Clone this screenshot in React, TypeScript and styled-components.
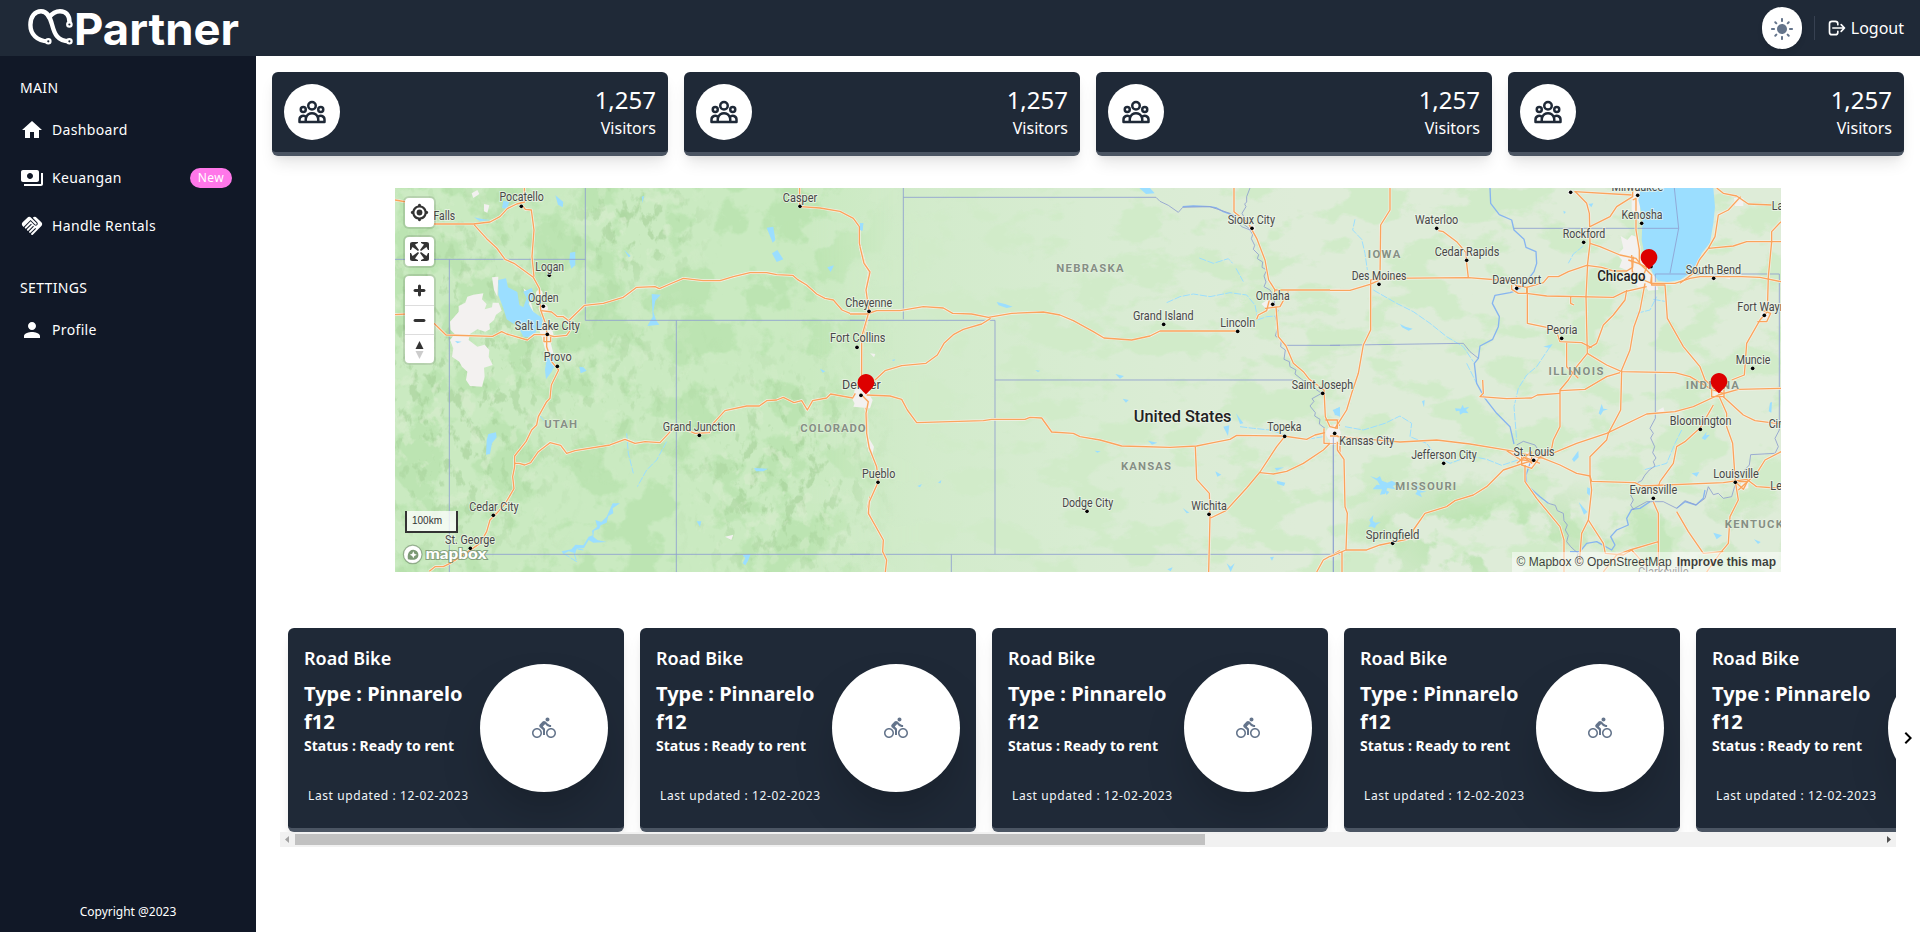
import React from "react";
import styled, { createGlobalStyle } from "styled-components";
import {
  MdChevronRight,
  MdDirectionsBike,
  MdHandshake,
  MdHome,
  MdLightMode,
  MdPayments,
  MdPerson,
} from "react-icons/md";

const GlobalStyle = createGlobalStyle`
  *, *::before, *::after { box-sizing: border-box; }
  body {
    margin: 0;
    background: #fff;
    color: #fff;
    font: 16px/24px "Noto Sans", sans-serif;
  }
  h2, h3, h4, p, ul { margin: 0; padding: 0; }
  svg { display: block; }
`;

/* ---------- Shell ---------- */

const Page = styled.div`
  display: flex;
  flex-direction: column;
  height: 932px;
  overflow: hidden;
`;

const Header = styled.header`
  display: flex;
  align-items: center;
  justify-content: space-between;
  flex: 0 0 56px;
  padding: 0 16px 0 28px;
  background: #1f2937;
`;

const HeaderActions = styled.div`
  display: flex;
  align-items: center;
`;

const ThemeButton = styled.button`
  display: grid;
  place-items: center;
  width: 40px;
  height: 42px;
  padding: 2px 0 0;
  border: 0;
  border-radius: 21px;
  background: #fff;
  color: #64748b;
  box-shadow: 0 4px 6px -1px rgba(0, 0, 0, 0.1);
`;

const Divider = styled.span`
  width: 1px;
  height: 24px;
  margin: 0 12px;
  background: #374151;
`;

const Logout = styled.a`
  display: flex;
  align-items: center;
  gap: 4px;
`;

const Body = styled.div`
  display: flex;
  flex: 1;
  min-height: 0;
`;

const Sidebar = styled.nav`
  display: flex;
  flex-direction: column;
  justify-content: space-between;
  flex: 0 0 256px;
  background: #111827;
  font-size: 14px;
  line-height: 20px;
  letter-spacing: 0.35px;
`;

const Menu = styled.ul`
  display: flex;
  flex-direction: column;
  gap: 4px;
  padding-top: 16px;
  list-style: none;
`;

const MenuHeading = styled.li<{ $spaced?: boolean }>`
  display: flex;
  align-items: center;
  height: 32px;
  margin-top: ${(p) => (p.$spaced ? 20 : 0)}px;
  padding: 0 20px;
`;

const MenuItem = styled.li`
  display: flex;
  align-items: center;
  gap: 8px;
  height: 44px;
  padding: 0 24px 0 20px;
`;

const Pill = styled.span`
  margin-left: auto;
  padding: 0 8px;
  border-radius: 10px;
  background: #ff77e9;
  font-size: 12px;
`;

const Copyright = styled.p`
  padding-bottom: 12px;
  text-align: center;
  font-size: 12px;
  line-height: 16px;
  letter-spacing: 0;
`;

const Main = styled.main`
  flex: 1;
  min-width: 0;
  padding-top: 16px;
`;

/* ---------- Statistics ---------- */

const Stats = styled.section`
  display: grid;
  grid-template-columns: repeat(4, 1fr);
  gap: 16px;
  padding: 0 16px;
`;

const StatCard = styled.article`
  display: flex;
  align-items: center;
  justify-content: space-between;
  height: 84px;
  padding: 0 12px;
  border-bottom: 4px solid #4b5563;
  border-radius: 6px;
  background: #1f2937;
  box-shadow: 0 10px 15px -3px rgba(0, 0, 0, 0.1), 0 4px 6px -2px rgba(0, 0, 0, 0.05);
`;

const StatIcon = styled.div`
  display: grid;
  place-items: center;
  width: 56px;
  height: 56px;
  border-radius: 50%;
  background: #fff;
  color: #1f2937;
`;

const StatText = styled.div`
  text-align: right;
`;

const StatValue = styled.p`
  font-size: 24px;
  line-height: 32px;
`;

/* ---------- Map ---------- */

const MapFrame = styled.section`
  position: relative;
  width: 1386px;
  height: 384px;
  margin: 32px 0 56px 139px;
  overflow: hidden;
  font: 12px/20px "Liberation Sans", sans-serif;
  color: rgba(0, 0, 0, 0.75);
`;

const MapControls = styled.div`
  position: absolute;
  left: 10px;
  top: 10px;
  display: flex;
  flex-direction: column;
  gap: 10px;
`;

const ControlGroup = styled.div`
  width: 29px;
  border-radius: 4px;
  background: #fff;
  box-shadow: 0 0 0 2px rgba(0, 0, 0, 0.1);
  overflow: visible;
`;

const ControlButton = styled.div`
  width: 29px;
  height: 29px;
  color: #333;

  & + & {
    border-top: 1px solid #ddd;
  }
`;

const ScaleBar = styled.div`
  position: absolute;
  left: 10px;
  top: 323px;
  width: 53px;
  height: 22px;
  padding: 0 5px;
  border: 2px solid #333;
  border-top: 0;
  background: rgba(255, 255, 255, 0.75);
  color: #333;
  font-size: 10px;
  line-height: 20px;
`;

const MapLogo = styled.svg`
  position: absolute;
  left: 6px;
  top: 355px;
`;

const Attribution = styled.div`
  position: absolute;
  right: 0;
  bottom: 0;
  display: flex;
  gap: 5px;
  padding: 0 5px;
  background: rgba(255, 255, 255, 0.5);
  white-space: pre;
`;

const Pin = styled.svg<{ $x: number; $y: number }>`
  position: absolute;
  left: ${(p) => p.$x}px;
  top: ${(p) => p.$y}px;
`;

/* ---------- Bikes ---------- */

const BikeSection = styled.section`
  display: flex;
  align-items: center;
  padding-left: 24px;
  color: #000;
`;

const BikeScroller = styled.div`
  flex: 1;
  min-width: 0;
`;

const BikeTrack = styled.div`
  display: flex;
  gap: 16px;
  padding: 0 8px;
  overflow: hidden;
`;

const BikeCard = styled.article`
  display: flex;
  flex: 0 0 336px;
  height: 204px;
  padding: 16px;
  border-bottom: 4px solid #4b5563;
  border-radius: 6px;
  background: #1f2937;
  color: #fff;
  box-shadow: 0 10px 15px -3px rgba(0, 0, 0, 0.1), 0 4px 6px -2px rgba(0, 0, 0, 0.05);
`;

const BikeInfo = styled.div`
  width: 176px;
`;

const BikeTitle = styled.h2`
  margin-bottom: 8px;
  font-size: 18px;
  line-height: 28px;
  font-weight: 600;
`;

const BikeType = styled.h3`
  font-size: 20px;
  line-height: 28px;
  font-weight: 700;
`;

const BikeStatus = styled.h4`
  font-size: 14px;
  line-height: 20px;
  font-weight: 700;
`;

const BikeUpdated = styled.p`
  margin: 32px 0 0 4px;
  font-size: 12px;
  line-height: 16px;
  letter-spacing: 0.6px;
  white-space: nowrap;
  color: #f1f5f9;
`;

const BikeBadge = styled.div`
  display: grid;
  place-items: center;
  width: 128px;
  height: 128px;
  margin-top: 20px;
  border-radius: 50%;
  background: #fff;
  color: #64748b;
  box-shadow: 0 25px 50px -12px rgba(0, 0, 0, 0.25);
`;

const ScrollBar = styled.div`
  display: flex;
  align-items: center;
  height: 15px;
  background: #f1f1f1;
`;

const ScrollThumb = styled.div`
  width: 910px;
  height: 11px;
  margin-right: auto;
  background: #c1c1c1;
`;

/* ---------- Drawings ---------- */

const Logo = () => (
  <svg width="220" height="56" viewBox="0 0 220 56" fill="none">
    <g stroke="#fff" strokeWidth="4.400" strokeLinecap="round">
      <path d="M20 41.300C9 41.300 2.400 34 2.400 25C2.400 16.500 7 11.200 13 11.200C19.500 11.200 22 17 24 24.500C26.500 34 29.500 41.300 41 41.300" />
      <path d="M21.500 17C24.500 13 28 11.200 32 11.200C38 11.200 41.500 15 41.500 22" />
    </g>
    <g fill="#1f2937" stroke="#fff" strokeWidth="2.200">
      <circle cx="20.300" cy="41.300" r="2.200" />
      <circle cx="41.400" cy="41.300" r="2.200" />
      <circle cx="41.400" cy="24.500" r="2.200" />
    </g>
    <text
      x="46"
      y="45"
      fill="#fff"
      fontFamily="Inter, sans-serif"
      fontWeight="700"
      fontSize="44.500"
      textLength="165"
      lengthAdjust="spacingAndGlyphs"
    >
      Partner
    </text>
  </svg>
);

const LogoutIcon = () => (
  <svg width="20" height="20" viewBox="0 0 24 24" fill="none" stroke="currentColor" strokeWidth="2" strokeLinecap="round" strokeLinejoin="round">
    <path d="M17 16l4-4m0 0l-4-4m4 4H7m6 4v1a3 3 0 01-3 3H6a3 3 0 01-3-3V7a3 3 0 013-3h4a3 3 0 013 3v1" />
  </svg>
);

const UsersIcon = () => (
  <svg width="30" height="30" viewBox="0 0 24 24" fill="none" stroke="currentColor" strokeWidth="2" strokeLinecap="round" strokeLinejoin="round">
    <path d="M17 20h5v-2a3 3 0 00-5.356-1.857M17 20H7m10 0v-2c0-.656-.126-1.283-.356-1.857M7 20H2v-2a3 3 0 015.356-1.857M7 20v-2c0-.656.126-1.283.356-1.857m0 0a5.002 5.002 0 019.288 0M15 7a3 3 0 11-6 0 3 3 0 016 0zm6 3a2 2 0 11-4 0 2 2 0 014 0zM7 10a2 2 0 11-4 0 2 2 0 014 0z" />
  </svg>
);

const PIN_PATH =
  "M20.2,15.7L20.2,15.7c1.1-1.6,1.8-3.6,1.8-5.7c0-5.6-4.5-10-10-10S2,4.5,2,10c0,2,0.6,3.9,1.6,5.4c0,0.1,0.1,0.2,0.2,0.3c0,0,0.1,0.1,0.1,0.2c0.2,0.3,0.4,0.6,0.7,0.9c2.6,3.1,7.4,7.6,7.4,7.6s4.8-4.5,7.4-7.5c0.2-0.3,0.5-0.6,0.7-0.9C20.1,15.8,20.2,15.8,20.2,15.7z";

const pins = [
  { x: 460.7, y: 186 },
  { x: 1244, y: 61 },
  { x: 1313.7, y: 185 },
];

/* ---------- Map data ----------
   The map is split into three sheets, each drawn in units of a third of a pixel. */

type Kind = "city" | "state" | "large" | "country";
type Label = { t: string; x: number; y: number; w: number; kind?: Kind };

interface Sheet {
  offset: number;
  desert: string[];
  water: string[];
  streams: string[];
  rivers: string[];
  borders: string[];
  roads: string[];
  towns: [number, number, number?][];
  dots: [number, number][];
  labels: Label[];
}

const city = (t: string, x: number, y: number, w: number, kind: Kind = "city"): Label => ({ t, x, y, w, kind });

const sheets: Sheet[] = [
  {
    offset: -5,
    desert: [
      "M232 350L250 344L280 340L276 358L290 372L284 388L306 382L308 368L326 368L335 392L318 404L312 420L298 432L300 448L286 455L262 448L240 462L236 480L262 500L284 494L298 510L296 530L308 555L282 563L284 590L276 620L240 618L228 600L232 575L216 560L208 545L186 530L190 505L180 480L194 462L182 450L180 425L206 395L206 378L226 368Z",
      "M306 292L325 290L322 350L312 330Z",
      "M245 40L262 30L268 42L250 54Z M282 72L298 76L292 98L282 94Z",
      "M400 325L415 335L430 395L470 440L490 520L470 525L455 470L440 430Z",
      "M1005 1070L1030 1064L1024 1080Z",
      "M1395 625L1420 615L1440 622V680H1400L1388 660Z",
    ],
    water: [
      "M325 300L348 295L354 322L382 336L388 375L400 382L410 355L400 335L425 324L432 345L415 372L430 395L458 415L455 442L440 452L425 472L400 470L385 440L350 418L340 385L325 345Z",
      "M470 535L490 530L495 555L485 575L468 598L465 570Z",
      "M540 218L556 215L556 255L544 266L538 245Z",
      "M295 762L318 757L320 772L306 790L300 822L288 824L290 780Z",
      "M496 46L520 66L518 82L504 74Z M568 560L580 562L590 572L572 580Z",
      "M703 210L722 228L716 232Z M1130 143L1150 140L1156 180L1148 188Z M1146 220L1162 210L1180 238L1160 246Z",
      "M785 342L812 344L796 362L790 395L798 420L808 434L772 438L788 410Z",
      "M1312 262L1332 256L1322 276Z M1410 130L1420 130L1418 152L1408 150Z M1290 566L1306 574L1298 578Z",
      "M1092 864L1134 866L1120 874L1098 874Z M340 62L358 66L350 86L336 84Z M755 50L762 48L758 70Z",
      "M668 970L690 970L668 985L670 1000L655 1008L650 1028L632 1036L628 1046L612 1052L610 1070L622 1080L650 1086L610 1088L596 1080L582 1104L560 1106L556 1120L536 1114L520 1122L515 1114L545 1108L556 1094L580 1096L596 1070L608 1066L606 1052L622 1040L616 1020L634 1026L650 1010Z",
      "M1058 1126L1082 1122L1074 1142L1066 1156L1058 1150L1066 1134Z M920 1024L934 1024L930 1040Z M195 483L215 485L202 490Z",
      "M252 112L280 118L302 120L270 124Z",
    ],
    streams: ["M450 708L475 735", "M710 760L715 820L730 880", "M830 785L800 840L770 870L742 920", "M520 1120L560 1145L548 1105L580 1110"],
    rivers: [],
    borders: ["M15 238H586", "M178 238V1176", "M586 24V421H1440", "M859 421V1176", "M178 1123H1440"],
    roads: [
      "M15 60L50 66M132 132H250L300 126L330 110L352 86L380 72L392 69L404 66L403 24",
      "M398 78L406 88L424 90L432 150L426 230L432 290",
      "M252 134L290 176L320 204L345 238L372 250L400 270L430 292L448 325L452 390L470 440L470 500L485 545L506 570L484 615L480 655L470 665L445 710L440 735L425 750L408 785L374 828L374 860L368 890L372 926L345 972L320 1000L300 1020L290 1055L270 1090L230 1118L180 1150L160 1160H135L118 1174",
      "M15 404L50 402M132 430L168 465L308 469L335 455L350 462L412 480L432 464H470L492 470L530 466L540 452L538 420L584 376L640 370L700 352L740 322L795 320L808 326L840 312L880 295L940 302H990L1030 290L1080 278L1130 278L1160 284L1208 286L1222 298L1250 315L1280 342L1305 355L1330 360L1356 390L1380 400L1440 402",
      "M454 392L485 396L502 410L520 410L538 424",
      "M462 470V485H482V470",
      "M374 850H388L404 855L422 848L445 815L480 788L512 796L530 820L555 812L660 795L705 778L735 790L765 785L810 788L850 745M890 750L915 760L958 758L970 730L1005 692L1070 678H1108L1130 662L1160 660L1180 652L1212 668L1235 662L1252 690L1268 662L1310 654L1322 642L1388 654L1396 640",
      "M1229 24V79M1232 80L1290 84L1350 94L1390 115L1408 140L1408 190L1424 250L1438 276L1428 330L1438 395L1416 480L1413 620",
      "M1418 645L1430 700L1432 770L1440 815M1440 950L1434 980L1440 1010",
    ],
    towns: [[448, 340], [460, 385, 14], [472, 463, 18]],
    dots: [[394, 79], [478, 286], [460, 379], [472, 463], [502, 559], [1230, 79], [928, 766], [310, 1006], [241, 1105]],
    labels: [
      city("Pocatello", 395, 51, 133),
      city("Falls", 163, 106, 65),
      city("Logan", 479, 261, 86),
      city("Ogden", 460, 353, 92),
      city("Salt Lake City", 472, 437, 195),
      city("Provo", 503, 531, 84),
      city("Casper", 1230, 54, 103),
      city("Grand Junction", 927, 739, 218),
      city("Cedar City", 312, 980, 148),
      city("St. George", 240, 1079, 150),
      city("UTAH", 512, 732, 98, "state"),
      city("COLORADO", 1329, 743, 196, "state"),
    ],
  },
  {
    offset: 465,
    desert: ["M-5 640L22 635L38 660L30 685L-20 680Z", "M24 770L42 800L38 820L22 800Z", "M30 520L46 522L42 532Z", "M1204 372L1226 356L1246 375L1225 392Z"],
    water: [
      "M838 24H870L884 40L858 42Z",
      "M410 366L435 372L458 380L440 384L416 376Z",
      "M766 582L792 588L780 596Z M788 656L806 660L798 668Z M864 782L892 788L876 794Z M704 812L722 814L712 818Z",
      "M1128 700L1150 730L1140 732Z M1090 740L1108 736L1104 768Z M1066 874L1084 884L1072 890Z M968 984L988 998L980 1000Z",
      "M1250 902L1276 908L1272 918L1252 912Z M1244 864L1272 862L1250 872Z M1418 690L1440 682V710L1426 704Z M1230 1132L1242 1130L1236 1142Z",
      "M1100 1150L1112 1160L1124 1150L1112 1176Z M922 1168L938 1162L932 1174Z M172 918L186 912L180 922Z M234 908L244 900L242 910Z M95 540L106 538L102 544Z M526 570L540 572L534 576Z M0 130H10L6 152L0 150Z",
    ],
    streams: [
      "M920 368L960 350L1000 342L1050 350L1110 338L1160 345L1185 375L1192 410",
      "M1018 234L1060 250L1105 236L1118 250M1128 265L1150 305",
      "M1192 420L1220 410L1245 408",
      "M1140 740L1180 745L1230 750L1290 770L1340 778L1390 770",
    ],
    rivers: ["M968 80L1000 78L1050 80L1070 84L1090 95L1125 108"],
    borders: [
      "M130 24V418",
      "M130 52H888L900 64L925 76L955 97L968 82L1050 80L1110 100L1128 118L1145 140L1170 150",
      "M1170 24L1160 50L1160 66L1154 72L1158 80L1146 100L1156 118L1150 132L1168 146L1178 164L1174 176L1184 196L1180 208L1196 224L1192 236L1208 246L1206 262L1220 270L1212 288L1218 306L1212 320L1230 330L1242 350L1244 380L1254 392L1246 410L1254 440L1246 468L1264 480L1262 500L1276 510L1272 538L1288 545L1290 560L1308 570L1305 582L1325 598L1385 640L1356 656L1362 664L1350 678L1366 698L1364 708L1380 718L1378 732L1395 745",
      "M-30 421H405V1123",
      "M405 600H1300",
      "M-30 1123H1440",
      "M274 1123V1176",
      "M1420 770V1176",
      "M1275 496H1440",
    ],
    roads: [
      "M0 200L12 250L30 276L18 330L27 394L5 470V610",
      "M-30 402H20L50 392L120 392L190 380L250 384L278 400L335 402L385 412L455 400L550 396L600 405L640 422L700 455L732 474L815 480L870 468L900 453H1130",
      "M392 415L365 432L310 448L280 464L252 490L232 525L198 550L125 557L75 572L45 600",
      "M20 645L90 648L125 658L142 690L170 728L370 722L395 718H495L510 712L545 714L575 756L640 760L660 770L720 780L785 798L930 802L1010 798L1060 788L1110 778L1130 766L1270 768L1340 778L1365 765L1395 758",
      "M0 640L25 665L18 700L20 760L28 805L50 860L55 905L28 965L25 1000L70 1080L68 1115L80 1140L76 1176",
      "M1006 800L1010 898L1048 940L1050 1010L1046 1176M1052 1014L1098 992L1160 924L1200 876L1250 800L1274 770",
      "M1200 878L1240 882L1280 874L1330 850L1390 810L1410 790",
      "M1122 24V95L1165 130L1190 175L1215 240L1226 300L1244 328V345M1440 330H1246M1285 335L1260 380L1215 385M1190 418L1195 405L1220 392L1228 360",
      "M1248 380L1255 470L1278 498L1300 550L1330 575L1348 598L1392 630L1396 710L1410 740L1440 735M1396 720H1440M1392 745V790H1440V825",
      "M1440 1112L1390 1140L1370 1176",
    ],
    towns: [[27, 394, 8], [1420, 760, 22], [1176, 145, 10]],
    dots: [[27, 394], [-9, 502], [3, 646], [1176, 145], [1238, 373], [1133, 454], [911, 433], [1274, 769], [54, 907], [681, 994], [1047, 1003]],
    labels: [
      city("Cheyenne", 26, 368, 141),
      city("Fort Collins", -7, 474, 166),
      city("Denver", 4, 615, 116, "city"),
      city("Sioux City", 1174, 120, 142),
      city("Omaha", 1238, 347, 102),
      city("Lincoln", 1133, 428, 105),
      city("Grand Island", 910, 407, 182),
      city("Topeka", 1273, 741, 103),
      city("Pueblo", 56, 880, 100),
      city("Dodge City", 683, 967, 153),
      city("Wichita", 1047, 977, 107),
      city("NEBRASKA", 690, 263, 202, "state"),
      city("KANSAS", 858, 858, 150, "state"),
      city("United States", 968, 710, 293, "country"),
    ],
  },
  {
    offset: 935,
    desert: [
      "M872 168L892 180L905 165L922 172L932 200L926 222L945 240L955 265L975 290L985 330L955 332L945 318L925 322L908 300L890 290L895 272L868 262L876 240L862 225L880 205Z",
      "M905 24H930V130L905 90Z",
      "M565 835L590 815L625 830L605 862L575 855Z M985 690L1000 682L1004 696H982Z M1212 54H1240V78H1215Z",
      "M1235 905L1255 895V925L1225 930Z M1170 290L1200 286V298Z M1150 635H1182V655H1150Z M0 740L25 730V790H0Z",
    ],
    water: [
      "M933 24L925 60L938 110L935 180L942 215L958 250L968 280L985 302L1012 306L1050 300L1080 280L1105 245L1115 220L1140 188L1150 130L1155 80L1150 24Z",
      "M745 812L746 832L732 846L726 838Z M772 922L782 926L780 948L771 940Z",
      "M375 685L392 686L398 674L402 684L418 680L408 690L416 700L400 698L390 704L388 692L378 694Z M210 432L226 440L248 446L236 452L216 442Z M806 700L815 672L820 686L834 688L820 692L812 706Z",
      "M120 888L140 895L150 888L156 902L172 908L185 902L205 912L188 918L196 928L172 924L165 942L150 944L156 928L128 928L140 914L150 916L142 902Z M250 912L268 920L262 930L290 935L270 938L276 952L256 942L262 934Z",
      "M115 1040L122 1030L118 1020L130 1005L128 1022L136 1028L152 1026L140 1034L134 1045L126 1040Z M162 928L178 936L170 945Z",
      "M1115 775L1130 755L1128 766L1140 764L1125 780Z M1085 880L1108 876L1100 890Z M1150 1058L1176 1066L1160 1078Z M1272 1078L1292 1086L1284 1092Z",
      "M15 688L30 680L25 705L14 706Z M1320 668L1326 666L1324 698L1316 694Z M746 966L772 996L762 1004Z M775 72L790 70L784 82Z M700 92L708 96L702 102Z M276 664L284 660L282 682Z M640 500L668 492L660 504Z",
    ],
    streams: [
      "M75 118L68 150L95 178L105 220L112 270",
      "M130 330L200 370L250 395L300 430L350 470L400 500L430 545",
      "M660 500L620 560L590 585L565 625L552 680L560 780",
      "M45 740L100 750L165 730L210 708L245 730L240 770L290 790L320 830L360 850L420 828L470 838L515 856L570 838",
      "M410 550L440 610",
      "M760 198L730 222L715 250",
      "M970 358L1010 365",
      "M1055 750L1035 790L1010 850L940 870",
      "M920 400L960 390L980 350",
    ],
    rivers: [
      "M480 24L482 70L508 104L545 120L552 150L582 178L588 202L618 215L620 250L612 275L585 310L560 332L540 338L495 346L487 370L508 410L505 440L488 478L450 498L445 535L433 550L440 610L465 655L500 700L540 740L552 792",
      "M600 850L588 885L590 915L630 950L655 970",
      "M720 1115L750 1115L770 1090L800 1085L845 1110L855 1095L842 1070L860 1050L895 1035L890 1015L905 988L930 985L960 965",
      "M1040 985L1065 965L1098 975L1120 955L1125 930",
    ],
    borders: [
      "M552 145H1046L1033 24M1046 145L1020 280",
      "M976 282H1348V750L1335 775L1345 800L1335 820L1262 824L1258 855L1235 880L1218 905L1205 950L1180 955L1165 940L1150 944L1135 920L1125 955L1098 975L1065 962L1040 985L1000 965L950 965L905 990",
      "M976 282V715L960 745L970 760L962 774L974 800L968 818L978 834L970 845L975 858L958 870L945 885L935 902L915 912L918 930L902 945L910 960L902 975L912 990",
      "M0 496L400 490L420 515L445 535",
      "M655 970L676 976L682 992L700 1000L702 1022L712 1035L706 1050L715 1066L710 1085L722 1100L735 1112L745 1120L740 1132L755 1145",
      "M10 770V1176",
      "M560 795L580 784L615 795L628 815L600 850",
    ],
    roads: [
      "M180 24V90L152 135L150 290M150 295L122 300V330M0 331H60L120 313L160 295L415 293L545 303L560 318L590 322L640 308L655 290H685L715 275L770 256L815 262L850 273H890L908 262L910 230",
      "M325 152L340 155L380 185L408 218L410 250L415 293",
      "M122 330L122 450L100 495L85 580L65 640L50 690L15 745",
      "M0 720H22V745L0 740M0 768H25M22 785V810L42 838L45 980L52 1000L48 1110L0 1130M36 1115V1176",
      "M22 770L210 786L320 780L420 792L540 812L640 835L690 855L740 880L780 888L785 904L915 908L935 918L1180 908L1250 898L1280 920L1353 925",
      "M48 1110H110L150 1095L230 1078L250 1070V1050L285 1000L350 980L375 962L430 945L470 920L520 870L580 850L611 841",
      "M590 322V340H565L545 328V315M592 320V430L650 442L680 455L690 485L755 488L785 503M590 340L650 348L850 352L885 335L950 320",
      "M735 34L770 70L778 100L780 190L773 250L768 350L772 520L740 560L715 600L690 630V740L670 780L665 805L625 835",
      "M733 35L905 45M908 24V50L860 80L840 110L780 140M908 60L918 55V150L928 210V250L965 285L962 310",
      "M780 190L810 200L870 225L918 235L930 250M905 225L907 275L940 300L965 310H1035L1080 295L1110 290H1235L1290 292L1353 305",
      "M890 330L885 360L850 405L820 435L800 490L775 505M945 310L930 390L912 440L900 510L875 570L872 690L835 760L830 780L780 830V890L785 930L775 1020L755 1060L748 1150",
      "M965 290V315L1005 315L1012 415L1060 500L1110 560L1125 600L1165 635",
      "M722 350V370L732 375M710 488V560L745 595M772 520L830 555L875 575L1035 578L1080 590L1145 628L1180 640M690 632L765 628L830 590L870 578",
      "M458 600L460 640L450 650L530 656L605 654L622 645L690 640",
      "M625 835L680 815L740 790L830 760L950 702L1035 695L1090 680L1165 645L1225 628L1353 625",
      "M1180 650L1240 705L1275 722L1353 732M1168 650L1190 700V740L1208 790L1216 905L1225 960L1200 1010L1195 1090L1170 1120L1130 1176",
      "M1150 675L1110 745L1090 762L1065 785L1040 800L1030 850L990 905L985 920M970 965L985 1000V1176M985 1085L900 1110L860 1125L820 1176",
      "M585 855V905L620 955L690 1040L702 1080V1176M775 1020L820 1090L826 1120L880 1125L905 1110L950 1160",
      "M1040 995L1075 1055L1120 1120L1180 1115",
      "M1225 930L1280 880L1305 840L1353 815",
      "M1160 24L1180 40L1220 48L1255 72L1325 75M1232 50L1195 90L1165 105L1155 170L1135 205L1108 240L1090 280L1050 310M1135 205L1210 198L1250 185L1353 185M1353 125L1325 155V185L1315 290L1312 395L1290 420L1250 490L1243 585L1205 600",
      "M1145 625V650H1182V622H1145M1282 425H1310L1322 400L1300 392M560 850L605 815V850L580 830L630 850M895 240L925 250L950 262L935 300M1216 905L1240 928L1252 905H1225",
      "M530 812L570 838L605 845M575 820V855L605 865L625 838",
    ],
    towns: [[722, 37, 8], [611, 841, 12], [1303, 406, 12], [560, 325, 10]],
    dots: [[-22, 640], [14, 760], [320, 145], [410, 241], [147, 313], [560, 325], [761, 187], [935, 130], [923, 46], [722, 37], [1151, 295], [1303, 406], [695, 475], [1268, 565], [1111, 748], [1216, 907], [970, 955], [611, 841], [341, 850], [188, 1090], [963, 260]],
    labels: [
      city("Saint Joseph", -23, 614, 184),
      city("Kansas City", 110, 782, 165),
      city("Waterloo", 320, 119, 130),
      city("Cedar Rapids", 411, 216, 194),
      city("Des Moines", 147, 286, 164),
      city("Davenport", 560, 298, 147),
      city("Rockford", 762, 161, 128),
      city("Kenosha", 936, 103, 123),
      city("Milwaukee", 922, 21, 155),
      city("South Bend", 1150, 269, 166),
      city("Lansing", 1381, 76, 112),
      city("Fort Wayne", 1303, 379, 162),
      city("Peoria", 696, 449, 93),
      city("Muncie", 1269, 539, 104),
      city("Bloomington", 1112, 721, 185),
      city("Cincinnati", 1387, 732, 142),
      city("Louisville", 1218, 881, 137),
      city("Lexington", 1392, 916, 142),
      city("Evansville", 970, 930, 143),
      city("St. Louis", 612, 815, 123),
      city("Jefferson City", 342, 824, 197),
      city("Springfield", 188, 1063, 161),
      city("Clarksville", 1000, 1175, 152),
      city("Chicago", 874, 289, 145, "large"),
      city("IOWA", 162, 222, 98, "state"),
      city("ILLINOIS", 738, 573, 165, "state"),
      city("INDIANA", 1147, 614, 160, "state"),
      city("MISSOURI", 287, 918, 183, "state"),
      city("KENTUCKY", 1284, 1032, 200, "state"),
    ],
  },
];

const labelStyle: Record<Kind, { size: number; weight: number; fill: string; spacing: number }> = {
  city: { size: 37, weight: 400, fill: "#484848", spacing: 0 },
  state: { size: 34, weight: 700, fill: "#858f84", spacing: 4 },
  large: { size: 43, weight: 500, fill: "#222", spacing: 0 },
  country: { size: 49, weight: 500, fill: "#222", spacing: 0 },
};

const place = (offset: number) => `translate(${offset} -8) scale(0.33333)`;

const Terrain = () => (
  <g>
    <rect width="1386" height="384" fill="url(#land)" />
    <rect width="1386" height="384" filter="url(#meadow)" mask="url(#plainsMask)" />
    <rect width="1386" height="384" filter="url(#forest)" mask="url(#mountainMask)" opacity="0.75" />
    <rect width="1386" height="384" filter="url(#ridge)" mask="url(#ridgeMask)" opacity="0.6" />
    <rect width="1386" height="384" filter="url(#meadowWest)" mask="url(#ridgeMask)" opacity="0.6" />
  </g>
);

const noise = (id: string, freq: string, seed: number, octaves: number, matrix: string) => (
  <filter id={id} x="0" y="0" width="100%" height="100%" colorInterpolationFilters="sRGB">
    <feTurbulence type="fractalNoise" baseFrequency={freq} numOctaves={octaves} seed={seed} />
    <feColorMatrix type="matrix" values={matrix} />
  </filter>
);

const MapCanvas = () => (
  <svg width="1386" height="384" viewBox="0 0 1386 384">
    <defs>
      <linearGradient id="land" x1="0" x2="1">
        <stop offset="0" stopColor="#caeac1" />
        <stop offset="0.3" stopColor="#caeac1" />
        <stop offset="0.38" stopColor="#d2ebcb" />
        <stop offset="0.5" stopColor="#d8ecd2" />
        <stop offset="0.65" stopColor="#deecd8" />
        <stop offset="1" stopColor="#deecd8" />
      </linearGradient>
      <linearGradient id="fadeEast" x1="0" x2="1">
        <stop offset="0.28" stopColor="#fff" stopOpacity="0" />
        <stop offset="0.38" stopColor="#fff" />
      </linearGradient>
      <linearGradient id="fadeWest" x1="0" x2="1">
        <stop offset="0.3" stopColor="#fff" />
        <stop offset="0.36" stopColor="#fff" stopOpacity="0" />
      </linearGradient>
      <radialGradient id="spot">
        <stop offset="0.3" stopColor="#fff" />
        <stop offset="1" stopColor="#fff" stopOpacity="0" />
      </radialGradient>
      <mask id="plainsMask">
        <rect width="1386" height="384" fill="url(#fadeEast)" />
      </mask>
      <mask id="mountainMask">
        <rect width="1386" height="384" fill="url(#fadeWest)" />
        <ellipse cx="1080" cy="350" rx="150" ry="85" fill="url(#spot)" />
        <ellipse cx="1270" cy="350" rx="170" ry="70" fill="url(#spot)" opacity="0.6" />
      </mask>
      <mask id="ridgeMask">
        <ellipse cx="385" cy="290" rx="120" ry="150" fill="url(#spot)" />
        <ellipse cx="60" cy="200" rx="150" ry="260" fill="url(#spot)" />
        <ellipse cx="240" cy="40" rx="90" ry="80" fill="url(#spot)" />
        <ellipse cx="220" cy="190" rx="120" ry="110" fill="url(#spot)" opacity="0.6" />
      </mask>
      {noise("meadow", "0.018 0.03", 8, 5, "0 0 0 0 0.82  0 0 0 0 0.922  0 0 0 0 0.79  12 0 0 0 -6")}
      {noise("forest", "0.022 0.024", 3, 5, "0 0 0 0 0.72  0 0 0 0 0.89  0 0 0 0 0.68  12 0 0 0 -6")}
      {noise("ridge", "0.085 0.055", 21, 4, "0 0 0 0 0.65  0 0 0 0 0.82  0 0 0 0 0.6  9 0 0 0 -5")}
      {noise("meadowWest", "0.06 0.05", 5, 4, "0 0 0 0 0.85  0 0 0 0 0.93  0 0 0 0 0.81  9 0 0 0 -5.3")}
    </defs>
    <Terrain />
    {sheets.map((s) => (
      <g key={s.offset} transform={place(s.offset)} fill="none" strokeLinejoin="round">
        {s.desert.map((d) => <path key={d} d={d} fill="#f3f1f0" />)}
        {s.towns.map(([x, y, r = 10]) => <circle key={`${x}-${y}`} cx={x} cy={y} r={r} fill="#f3f1f0" />)}
        {s.water.map((d) => <path key={d} d={d} fill="#9bdeff" />)}
        {s.streams.map((d) => <path key={d} d={d} stroke="#9bdeff" strokeWidth="3" strokeDasharray="22 4" />)}
        {s.rivers.map((d) => <path key={d} d={d} stroke="#86b4f0" strokeWidth="4" />)}
        {s.borders.map((d) => <path key={d} d={d} stroke="#8f9fd0" strokeWidth="3" opacity="0.85" />)}
        {s.roads.map((d) => <path key={d} d={d} stroke="#f5f0e6" strokeWidth="8" />)}
        {s.roads.map((d) => <path key={`${d}-line`} d={d} stroke="#faa45c" strokeWidth="4" />)}
      </g>
    ))}
    {sheets.map((s) => (
      <g key={s.offset} transform={place(s.offset)}>
        {s.dots.map(([x, y]) => (
          <circle key={`${x}-${y}`} cx={x} cy={y} r="5.500" fill="#000" stroke="#fff" strokeOpacity="0.7" strokeWidth="3" paintOrder="stroke" />
        ))}
        {s.labels.map((l) => {
          const st = labelStyle[l.kind ?? "city"];
          return (
            <text
              key={l.t}
              x={l.x - l.w / 2}
              y={l.y + st.size * 0.35}
              textLength={l.w}
              lengthAdjust={l.kind === "state" ? "spacing" : "spacingAndGlyphs"}
              fontFamily="Roboto, sans-serif"
              fontSize={st.size}
              fontWeight={st.weight}
              fill={st.fill}
              stroke="#eef5ea"
              strokeOpacity="0.75"
              strokeWidth={l.kind === "state" ? 3 : 6}
              paintOrder="stroke"
            >
              {l.t}
            </text>
          );
        })}
      </g>
    ))}
  </svg>
);

const ControlIcon = ({ children, box = 29 }: { children: React.ReactNode; box?: number }) => (
  <svg width="29" height="29" viewBox={`0 0 ${box} ${box}`} fill="currentColor">
    {children}
  </svg>
);

const RentalMap = () => (
  <MapFrame>
    <MapCanvas />
    {pins.map((p) => (
      <Pin key={p.x} $x={p.x} $y={p.y} width="20" height="20" viewBox="0 0 24 24" overflow="visible">
        <path d={PIN_PATH} fill="#d00" />
      </Pin>
    ))}
    <MapControls>
      <ControlGroup>
        <ControlButton>
          <ControlIcon box={20}>
            <path fillRule="evenodd" d="M10 4C9 4 9 5 9 5v.1A5 5 0 0 0 5.1 9H5s-1 0-1 1 1 1 1 1h.1A5 5 0 0 0 9 14.9v.1s0 1 1 1 1-1 1-1v-.1a5 5 0 0 0 3.9-3.9h.1s1 0 1-1-1-1-1-1h-.1A5 5 0 0 0 11 5.1V5s0-1-1-1zm0 2.500a3.500 3.500 0 1 1 0 7 3.500 3.500 0 1 1 0-7z" />
            <circle cx="10" cy="10" r="2" />
          </ControlIcon>
        </ControlButton>
      </ControlGroup>
      <ControlGroup>
        <ControlButton>
          <ControlIcon>
            <path d="M24 16v5.500c0 1.750-.750 2.500-2.500 2.500H16v-1l3-1.500-4-5.500 1-1 5.500 4 1.500-3h1zM6 16l1.500 3 5.500-4 1 1-4 5.500 3 1.500v1H7.500C5.750 24 5 23.250 5 21.500V16h1zm7-11v1l-3 1.500 4 5.500-1 1-5.500-4L6 13H5V7.500C5 5.750 5.750 5 7.500 5H13zm11 2.500c0-1.750-.750-2.500-2.500-2.500H16v1l3 1.500-4 5.500 1 1 5.500-4 1.500 3h1V7.500z" />
          </ControlIcon>
        </ControlButton>
      </ControlGroup>
      <ControlGroup>
        <ControlButton>
          <ControlIcon>
            <path d="M14.500 8.500c-.750 0-1.500.750-1.500 1.500v3h-3c-.750 0-1.500.750-1.500 1.500S9.250 16 10 16h3v3c0 .750.750 1.500 1.500 1.500S16 19.750 16 19v-3h3c.750 0 1.500-.750 1.500-1.500S19.750 13 19 13h-3v-3c0-.750-.750-1.500-1.500-1.500z" />
          </ControlIcon>
        </ControlButton>
        <ControlButton>
          <ControlIcon>
            <path d="M10 13c-.750 0-1.500.750-1.500 1.500S9.250 16 10 16h9c.750 0 1.500-.750 1.500-1.500S19.750 13 19 13h-9z" />
          </ControlIcon>
        </ControlButton>
        <ControlButton>
          <ControlIcon>
            <path d="M10.500 14l4-8 4 8h-8z" />
            <path d="M10.500 16l4 8 4-8h-8z" fill="#ccc" />
          </ControlIcon>
        </ControlButton>
      </ControlGroup>
    </MapControls>
    <ScaleBar>100km</ScaleBar>
    <MapLogo width="90" height="24" viewBox="0 0 90 24">
      <circle cx="11.700" cy="11.400" r="9.300" fill="#fff" stroke="#74906c" strokeOpacity="0.7" strokeWidth="1.200" />
      <path d="M6.900 16.200C6.400 13 6.800 10.200 8.700 8.300a5.100 5.100 0 1 1 7.200 7.300C14 17.300 10.500 16.900 6.900 16.200z" fill="#7c9975" />
      <path d="M12.300 8.300l1.100 2.400 2.400 1.100-2.400 1.100-1.100 2.400-1.100-2.400-2.400-1.100 2.400-1.100z" fill="#fff" />
      <text
        x="24.500"
        y="16"
        textLength="61"
        lengthAdjust="spacingAndGlyphs"
        fontFamily="Lato, sans-serif"
        fontWeight="900"
        fontSize="15.500"
        fill="#fff"
        stroke="#74906c"
        strokeOpacity="0.8"
        strokeWidth="2"
        paintOrder="stroke"
      >
        mapbox
      </text>
    </MapLogo>
    <Attribution>
      <span>© Mapbox © OpenStreetMap</span>
      <b>Improve this map</b>
    </Attribution>
  </MapFrame>
);

/* ---------- Page ---------- */

const App = () => (
  <Page>
    <GlobalStyle />
    <Header>
      <Logo />
      <HeaderActions>
        <ThemeButton aria-label="Toggle theme">
          <MdLightMode size={24} />
        </ThemeButton>
        <Divider />
        <Logout>
          <LogoutIcon />
          Logout
        </Logout>
      </HeaderActions>
    </Header>
    <Body>
      <Sidebar>
        <Menu>
          <MenuHeading>MAIN</MenuHeading>
          <MenuItem><MdHome size={24} />Dashboard</MenuItem>
          <MenuItem><MdPayments size={24} />Keuangan<Pill>New</Pill></MenuItem>
          <MenuItem><MdHandshake size={24} />Handle Rentals</MenuItem>
          <MenuHeading $spaced>SETTINGS</MenuHeading>
          <MenuItem><MdPerson size={24} />Profile</MenuItem>
        </Menu>
        <Copyright>Copyright @2023</Copyright>
      </Sidebar>
      <Main>
        <Stats>
          {[0, 1, 2, 3].map((i) => (
            <StatCard key={i}>
              <StatIcon><UsersIcon /></StatIcon>
              <StatText>
                <StatValue>1,257</StatValue>
                <p>Visitors</p>
              </StatText>
            </StatCard>
          ))}
        </Stats>
        <RentalMap />
        <BikeSection>
          <BikeScroller>
            <BikeTrack>
              {[0, 1, 2, 3, 4].map((i) => (
                <BikeCard key={i}>
                  <BikeInfo>
                    <BikeTitle>Road Bike</BikeTitle>
                    <BikeType>Type : Pinnarelo f12</BikeType>
                    <BikeStatus>Status : Ready to rent</BikeStatus>
                    <BikeUpdated>Last updated : 12-02-2023</BikeUpdated>
                  </BikeInfo>
                  <BikeBadge><MdDirectionsBike size={24} /></BikeBadge>
                </BikeCard>
              ))}
            </BikeTrack>
            <ScrollBar>
              <svg width="15" height="15"><path d="M9 4v7L5 7.500z" fill="#a3a3a3" /></svg>
              <ScrollThumb />
              <svg width="15" height="15"><path d="M6 4v7l4-3.500z" fill="#505050" /></svg>
            </ScrollBar>
          </BikeScroller>
          <MdChevronRight size={24} />
        </BikeSection>
      </Main>
    </Body>
  </Page>
);

export default App;
